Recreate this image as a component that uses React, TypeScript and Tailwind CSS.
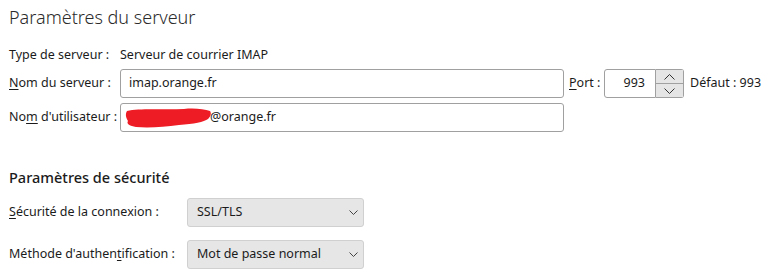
import React from "react";

function Chevron() {
  return (
    <svg width="9" height="5" viewBox="0 0 9 5" className="shrink-0">
      <path d="M0.5 0.5 L4.5 4.5 L8.5 0.5" fill="none" stroke="#444" strokeWidth="1" />
    </svg>
  );
}

export default function App() {
  return (
    <div
      className="w-[766px] h-[277px] bg-white text-[#1b1b1b] relative overflow-hidden"
      style={{ fontFamily: '"Noto Sans", "Open Sans", sans-serif' }}
    >
      <div className="pl-[9px] pt-[3px]">
        <h1 className="text-[18px] font-light text-[#2b2b2b] leading-[28px]">
          Paramètres du serveur
        </h1>

        <div className="mt-[15px] flex items-center text-[12.5px] leading-[16px] h-[18px]">
          <span className="w-[111px]">Type de serveur :</span>
          <span>Serveur de courrier IMAP</span>
        </div>

        <div className="mt-[5px] flex items-center text-[12.5px]">
          <span className="w-[111px]">
            <span className="underline underline-offset-2">N</span>om du serveur :
          </span>
          <div className="w-[444px] h-[29px] border border-[#a0a0a0] rounded-[3px] flex items-center px-[8px]">
            imap.orange.fr
          </div>
          <span className="ml-[5px] w-[35px]">
            <span className="underline underline-offset-2">P</span>ort :
          </span>
          <div className="w-[52px] h-[29px] border border-[#a0a0a0] rounded-l-[3px] flex items-center justify-end pr-[10px]">
            993
          </div>
          <div className="w-[28px] h-[29px] border border-l-0 border-[#a0a0a0] rounded-r-[3px] flex flex-col">
            <div className="flex-1 bg-[#e5e5e5] border-b border-[#a0a0a0] flex items-center justify-center">
              <svg width="11" height="6" viewBox="0 0 11 6">
                <path d="M0.5 5.5 L5.5 0.5 L10.5 5.5" fill="none" stroke="#333" strokeWidth="1" />
              </svg>
            </div>
            <div className="flex-1 bg-[#e5e5e5] flex items-center justify-center">
              <svg width="11" height="6" viewBox="0 0 11 6">
                <path d="M0.5 0.5 L5.5 5.5 L10.5 0.5" fill="none" stroke="#333" strokeWidth="1" />
              </svg>
            </div>
          </div>
          <span className="ml-[6px]">Défaut : 993</span>
        </div>

        <div className="mt-[5px] flex items-center text-[12.5px]">
          <span className="w-[111px]">
            No<span className="underline underline-offset-2">m</span> d'utilisateur :
          </span>
          <div className="relative w-[444px] h-[29px] border border-[#a0a0a0] rounded-[3px] flex items-center pl-[89px]">
            @orange.fr
            <svg
              className="absolute left-[3px] top-[2px]"
              width="88"
              height="24"
              viewBox="0 0 88 24"
            >
              <path
                d="M3 5 C15 2 40 4 60 3 C70 2 80 3 86 5 C88 8 86 11 84 13 C80 16 70 18 55 19 C40 21 25 22 12 21 C6 20 2 18 4 15 C2 12 1 8 3 5 Z"
                fill="#ee1c25"
              />
            </svg>
          </div>
        </div>

        <h2 className="mt-[35px] text-[14.5px] font-medium leading-[20px] text-[#1b1b1b]">
          Paramètres de sécurité
        </h2>

        <div className="mt-[11px] flex items-center text-[12.5px]">
          <span className="w-[178px]">
            <span className="underline underline-offset-2">S</span>écurité de la connexion :
          </span>
          <div className="w-[177px] h-[29px] bg-[#e6e6e6] border border-[#d0d0d0] rounded-[3px] flex items-center justify-between pl-[9px] pr-[5px]">
            <span>SSL/TLS</span>
            <Chevron />
          </div>
        </div>

        <div className="mt-[13px] flex items-center text-[12.5px]">
          <span className="w-[178px]">
            Méthode d'authen<span className="underline underline-offset-2">t</span>ification :
          </span>
          <div className="w-[177px] h-[29px] bg-[#e6e6e6] border border-[#d0d0d0] rounded-[3px] flex items-center justify-between pl-[9px] pr-[5px]">
            <span>Mot de passe normal</span>
            <Chevron />
          </div>
        </div>
      </div>
    </div>
  );
}
